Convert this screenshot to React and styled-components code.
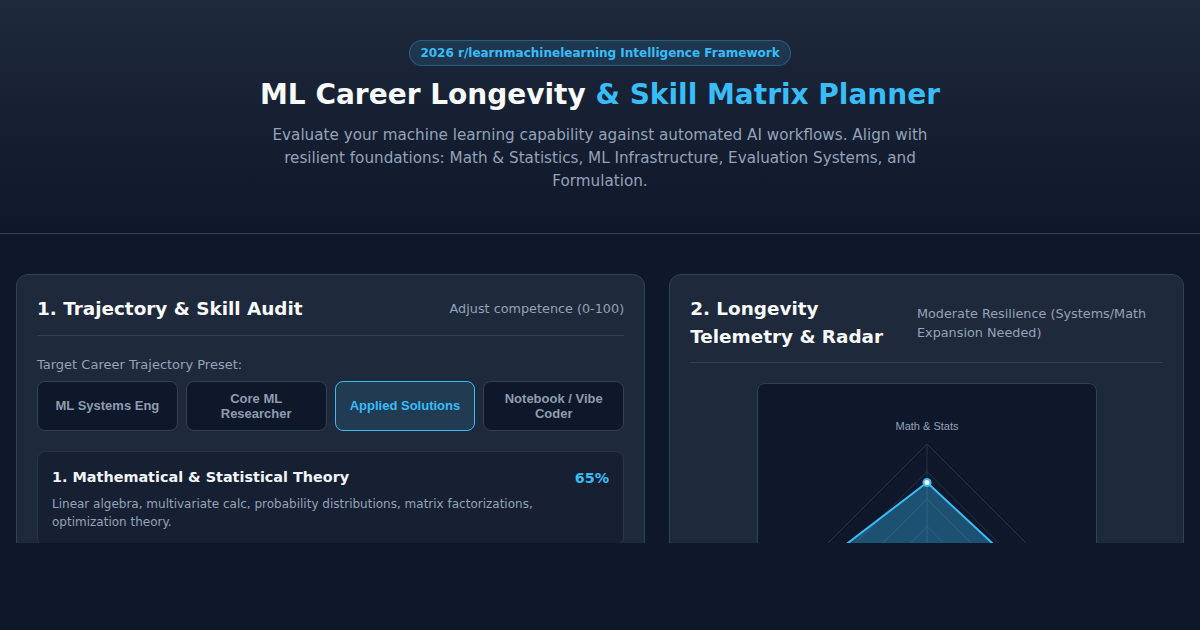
import React from "react";
import styled, { createGlobalStyle } from "styled-components";

const GlobalStyle = createGlobalStyle`
  html, body {
    margin: 0;
    padding: 0;
    background: #0f172a;
    color: #e2e8f0;
    font-family: "DejaVu Sans", "Noto Sans", sans-serif;
  }
  * { box-sizing: border-box; }
`;

const Page = styled.div`
  height: 543px;
  overflow: hidden;
  background: #0f172a;
`;

const Header = styled.header`
  padding: 40px 20px 40px;
  text-align: center;
  background: linear-gradient(180deg, #1e293b 0%, #0f172a 100%);
  border-bottom: 1px solid #334155;
`;

const Badge = styled.span`
  display: inline-block;
  padding: 5px 10px;
  font-size: 12px;
  font-weight: 700;
  line-height: 14px;
  color: #38bdf8;
  background: rgba(56, 189, 248, 0.12);
  border: 1px solid rgba(56, 189, 248, 0.3);
  border-radius: 999px;
`;

const Title = styled.h1`
  margin: 12px 0 0;
  font-size: 28px;
  line-height: 34px;
  font-weight: 700;
  color: #f8fafc;
`;

const Accent = styled.span`
  color: #38bdf8;
`;

const Subtitle = styled.p`
  margin: 12px auto 0;
  max-width: 680px;
  font-size: 15.2px;
  line-height: 23px;
  color: #94a3b8;
`;

const Main = styled.main`
  display: grid;
  grid-template-columns: 1.222fr 1fr;
  gap: 24px;
  padding: 40px 16px;
  align-items: start;
`;

const Card = styled.section`
  background: #1e293b;
  border: 1px solid #334155;
  border-radius: 12px;
  padding: 20px;
`;

const CardHeader = styled.div`
  display: flex;
  align-items: center;
  justify-content: space-between;
  gap: 24px;
  padding-bottom: 12px;
  border-bottom: 1px solid #334155;
  margin-bottom: 20px;
`;

const CardTitle = styled.h2`
  margin: 0;
  flex: ${(p) => (p.$grow ? "1 1 auto" : "0 1 auto")};
  font-size: 18.4px;
  line-height: 27.6px;
  font-weight: 700;
  color: #f8fafc;
`;

const Meta = styled.span`
  flex: ${(p) => (p.$width ? `0 0 ${p.$width}px` : "0 0 auto")};
  font-size: 12.8px;
  line-height: 19px;
  color: #94a3b8;
`;

const Label = styled.div`
  font-size: 13px;
  line-height: 18px;
  color: #94a3b8;
  margin-bottom: 7px;
`;

const PresetGrid = styled.div`
  display: grid;
  grid-template-columns: repeat(4, 1fr);
  gap: 8px;
  margin-bottom: 20px;
`;

const PresetButton = styled.button`
  height: 50px;
  padding: 9px 8px;
  font-family: "Liberation Sans", Arial, sans-serif;
  font-size: 13px;
  line-height: 15px;
  font-weight: 700;
  border-radius: 8px;
  cursor: pointer;
  color: ${(p) => (p.$active ? "#38bdf8" : "#8e9cb0")};
  background: ${(p) => (p.$active ? "#213b53" : "#0f172a")};
  border: 1px solid ${(p) => (p.$active ? "#38bdf8" : "#334155")};
`;

const SkillCard = styled.div`
  background: rgba(15, 23, 42, 0.5);
  border: 1px solid #2b3649;
  border-radius: 8px;
  padding: 14px;
`;

const SkillHead = styled.div`
  display: flex;
  justify-content: space-between;
  align-items: center;
  gap: 12px;
`;

const SkillName = styled.div`
  font-size: 14.4px;
  line-height: 20px;
  font-weight: 700;
  color: #f1f5f9;
`;

const SkillValue = styled.div`
  font-size: 14.4px;
  line-height: 20px;
  font-weight: 700;
  color: #38bdf8;
  padding-top: 2px;
`;

const SkillDesc = styled.p`
  margin: 7px 0 0;
  font-size: 12px;
  line-height: 18px;
  color: #94a3b8;
  padding-right: 60px;
`;

const RadarBox = styled.div`
  width: 340px;
  margin: 0 auto;
  padding: 20px 19px;
  background: #0f172a;
  border: 1px solid #334155;
  border-radius: 8px;
`;

const RadarSvg = styled.svg`
  display: block;
  width: 300px;
  height: 300px;
`;

const presets = [
  { label: "ML Systems Eng" },
  { label: "Core ML Researcher" },
  { label: "Applied Solutions", active: true },
  { label: "Notebook / Vibe Coder" },
];

const axes = [
  { name: "Math & Stats", value: 65 },
  { name: "ML Infra", value: 70 },
  { name: "Evaluation", value: 75 },
  { name: "Formulation", value: 85 },
];

function Radar() {
  const cx = 150;
  const cy = 150;
  const R = 110;
  const pt = (i, r) => {
    const a = -Math.PI / 2 + (i * Math.PI * 2) / axes.length;
    return [cx + r * Math.cos(a), cy + r * Math.sin(a)];
  };
  const levels = [0.25, 0.5, 0.75, 1];
  const poly = axes.map((a, i) => pt(i, (a.value / 100) * R).join(",")).join(" ");
  return (
    <RadarSvg viewBox="0 0 300 300">
      {levels.map((l) => (
        <polygon
          key={l}
          points={axes.map((_, i) => pt(i, l * R).join(",")).join(" ")}
          fill="none"
          stroke="#293548"
          strokeWidth="1"
        />
      ))}
      {axes.map((_, i) => {
        const [x, y] = pt(i, R);
        return <line key={i} x1={cx} y1={cy} x2={x} y2={y} stroke="#293548" strokeWidth="1" />;
      })}
      <polygon points={poly} fill="rgba(56,189,248,0.35)" stroke="#38bdf8" strokeWidth="2" strokeLinejoin="round" />
      {axes.map((a, i) => {
        const [x, y] = pt(i, (a.value / 100) * R);
        return <circle key={a.name} cx={x} cy={y} r="3.5" fill="#f0f9ff" stroke="#38bdf8" strokeWidth="2" />;
      })}
      <text
        x={cx}
        y={cy - R - 17}
        textAnchor="middle"
        dominantBaseline="middle"
        fontFamily="Liberation Sans, Arial, sans-serif"
        fontSize="11"
        fill="#94a3b8"
      >
        Math &amp; Stats
      </text>
    </RadarSvg>
  );
}

export default function App() {
  return (
    <>
      <GlobalStyle />
      <Page>
        <Header>
          <Badge>2026 r/learnmachinelearning Intelligence Framework</Badge>
          <Title>
            ML Career Longevity <Accent>&amp; Skill Matrix Planner</Accent>
          </Title>
          <Subtitle>
            Evaluate your machine learning capability against automated AI workflows. Align with resilient
            foundations: Math &amp; Statistics, ML Infrastructure, Evaluation Systems, and Formulation.
          </Subtitle>
        </Header>
        <Main>
          <Card>
            <CardHeader>
              <CardTitle>1. Trajectory &amp; Skill Audit</CardTitle>
              <Meta>Adjust competence (0-100)</Meta>
            </CardHeader>
            <Label>Target Career Trajectory Preset:</Label>
            <PresetGrid>
              {presets.map((p) => (
                <PresetButton key={p.label} $active={p.active}>
                  {p.label}
                </PresetButton>
              ))}
            </PresetGrid>
            <SkillCard>
              <SkillHead>
                <SkillName>1. Mathematical &amp; Statistical Theory</SkillName>
                <SkillValue>65%</SkillValue>
              </SkillHead>
              <SkillDesc>
                Linear algebra, multivariate calc, probability distributions, matrix factorizations, optimization
                theory.
              </SkillDesc>
            </SkillCard>
          </Card>
          <Card>
            <CardHeader>
              <CardTitle $grow>2. Longevity Telemetry &amp; Radar</CardTitle>
              <Meta $width={246}>Moderate Resilience (Systems/Math Expansion Needed)</Meta>
            </CardHeader>
            <RadarBox>
              <Radar />
            </RadarBox>
          </Card>
        </Main>
      </Page>
    </>
  );
}
